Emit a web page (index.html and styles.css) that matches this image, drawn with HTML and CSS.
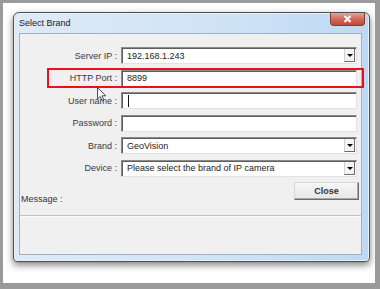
FILE: index.html
```html
<!DOCTYPE html>
<html>
<head>
    <link rel="stylesheet" href="styles.css">
</head>
<body>
    <div class="screen">
        <div class="window">
            <div class="titlebar">
                <span class="title">Select Brand</span>
                <span class="close-x">
                    <svg width="9" height="8" viewBox="0 0 9 8"><path d="M1.5 1 L7.5 7 M7.5 1 L1.5 7" stroke="#fff" stroke-width="2"/></svg>
                </span>
            </div>
            <div class="client">
                <div class="form">
                    <label>Server IP :</label>
                    <div class="field select">192.168.1.243<span class="arrow"></span></div>
                    <label>HTTP Port :</label>
                    <div class="field">8899</div>
                    <label>User name :</label>
                    <div class="field"><span class="caret"></span></div>
                    <label>Password :</label>
                    <div class="field"></div>
                    <label>Brand :</label>
                    <div class="field select">GeoVision<span class="arrow"></span></div>
                    <label>Device :</label>
                    <div class="field select">Please select the brand of IP camera<span class="arrow"></span></div>
                </div>
                <div class="actions">
                    <span class="message">Message :</span>
                    <button class="close">Close</button>
                </div>
                <div class="status"></div>
            </div>
            <div class="highlight"></div>
            <svg class="cursor" width="10" height="15" viewBox="0 0 10 15">
                <path d="M0.5 0.5 L0.5 12 L3.2 9.4 L5.2 14 L6.9 13.2 L5 8.8 L8.8 8.8 Z" fill="#fff" stroke="#333" stroke-width="1" stroke-linejoin="round"/>
            </svg>
        </div>
    </div>
</body>
</html>
```

FILE: styles.css
```css
* {
    box-sizing: border-box;
}

body {
    margin: 0;
    font-family: 'Liberation Sans', Arial, sans-serif;
    font-size: 9px;
    color: #333;
}

.screen {
    width: 380px;
    height: 289px;
    background: #fff;
    border-style: solid;
    border-color: #9a9a9a;
    border-width: 3px 5px 6px 3px;
    padding: 9px 0 0 10px;
    overflow: hidden;
}

.window {
    position: relative;
    width: 357px;
    height: 250px;
    border: 1px solid #4b4f55;
    border-radius: 6px 6px 4px 4px;
    background: linear-gradient(90deg, #dfeaf6, #cfe3f6 60%, #bcd9f3);
    box-shadow: 0 3px 7px rgba(0, 0, 0, 0.5), inset 0 0 0 1px #e8f2fb;
    display: flex;
    flex-direction: column;
}

.titlebar {
    height: 20px;
    display: flex;
    align-items: flex-start;
    justify-content: space-between;
    padding-left: 5px;
}

.title {
    margin-top: 5px;
    color: #222;
    font-size: 9px;
}

.close-x {
    width: 35px;
    height: 13px;
    margin-right: 4px;
    border: 1px solid #8a3a30;
    border-top: none;
    border-radius: 0 0 4px 4px;
    background: linear-gradient(#e6a595, #d06a5a 50%, #bd4a3c);
    display: flex;
    align-items: center;
    justify-content: center;
}

.client {
    flex: 1;
    margin: 0 7px 6px 5px;
    border: 1px solid #9fb0c2;
    background: #f0f0f0;
    display: flex;
    flex-direction: column;
}

.form {
    display: grid;
    grid-template-columns: 97px 236px;
    column-gap: 4px;
    row-gap: 5.5px;
    grid-auto-rows: 17px;
    margin-top: 13px;
}

.form label {
    text-align: right;
    align-self: center;
    white-space: nowrap;
    color: #3a3a3a;
}

.field {
    position: relative;
    background: #fff;
    border: 1px solid;
    border-color: #8a8a8a #e2e2e2 #e2e2e2 #8a8a8a;
    box-shadow: inset 1px 1px 0 #5e5e5e;
    padding: 0 0 0 5px;
    display: flex;
    align-items: center;
    color: #222;
    white-space: nowrap;
}

.arrow {
    position: absolute;
    right: 1px;
    top: 1px;
    bottom: 1px;
    width: 11px;
    background: #f4f4f4;
    border-left: 1px solid #d0d0d0;
    border-bottom: 1px solid #6a6a6a;
    border-right: 1px solid #6a6a6a;
}

.arrow::after {
    content: '';
    position: absolute;
    left: 2px;
    top: 5px;
    border-left: 3px solid transparent;
    border-right: 3px solid transparent;
    border-top: 3px solid #000;
}

.caret {
    width: 1px;
    height: 12px;
    background: #111;
    margin-left: 1px;
}

.actions {
    display: flex;
    justify-content: space-between;
    align-items: flex-start;
    margin-top: 5.5px;
    padding-right: 2px;
}

.message {
    margin-top: 12px;
    margin-left: 1px;
    color: #3a3040;
}

.close {
    width: 65px;
    height: 18px;
    padding: 0;
    font-family: 'Liberation Sans', Arial, sans-serif;
    font-size: 9px;
    font-weight: bold;
    color: #333;
    background: linear-gradient(#f6f6f6, #e6e6e6);
    border: 1px solid;
    border-color: #d8d8d8 #6b6b6b #6b6b6b #d8d8d8;
    box-shadow: inset -1px -1px 0 #a8a8a8;
}

.status {
    margin-top: 11px;
    flex: 1;
    border-top: 1px solid #c4c4c4;
    box-shadow: inset 0 1px 0 #fbfbfb;
}

.highlight {
    position: absolute;
    left: 33px;
    top: 55px;
    width: 317px;
    height: 20px;
    border: 2px solid #e8121a;
}

.cursor {
    position: absolute;
    left: 83px;
    top: 74px;
    opacity: 0.85;
}
```
